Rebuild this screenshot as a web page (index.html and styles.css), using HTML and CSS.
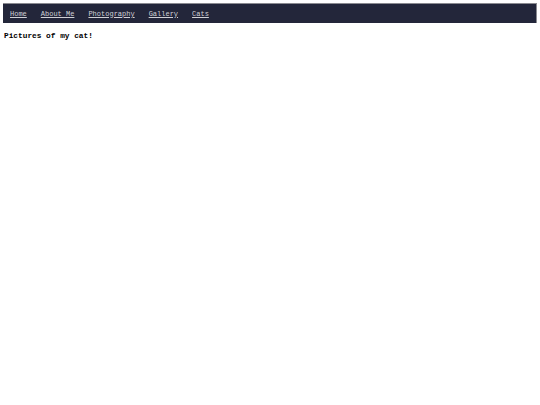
FILE: index.html
```html
<!DOCTYPE html>
<html>
<head>
<meta charset="utf-8">
<link rel="stylesheet" href="styles.css">
</head>
<body>
<nav class="nav">
  <a href="#">Home</a>
  <a href="#">About Me</a>
  <a href="#">Photography</a>
  <a href="#">Gallery</a>
  <a href="#">Cats</a>
</nav>
<h1 class="title">Pictures of my cat!</h1>
</body>
</html>
```
FILE: styles.css
```css
body {
  margin: 3px;
  background: #fff;
  font-family: "Courier New", Courier, "Nimbus Mono PS", FreeMono, "Liberation Mono", monospace;
}
.nav {
  display: flex;
  gap: 14px;
  align-items: center;
  height: 19px;
  padding: 0 0 0 7px;
  background: #23263a;
  border-top: 1px solid #8a8a90;
  border-right: 1px solid #8a8a90;
}
.nav a {
  color: #d0d0d6;
  font-size: 7px;
  text-decoration: underline;
}
.title {
  margin: 9px 0 0 1px;
  font-size: 7.8px;
  font-weight: bold;
  color: #000;
}
```
